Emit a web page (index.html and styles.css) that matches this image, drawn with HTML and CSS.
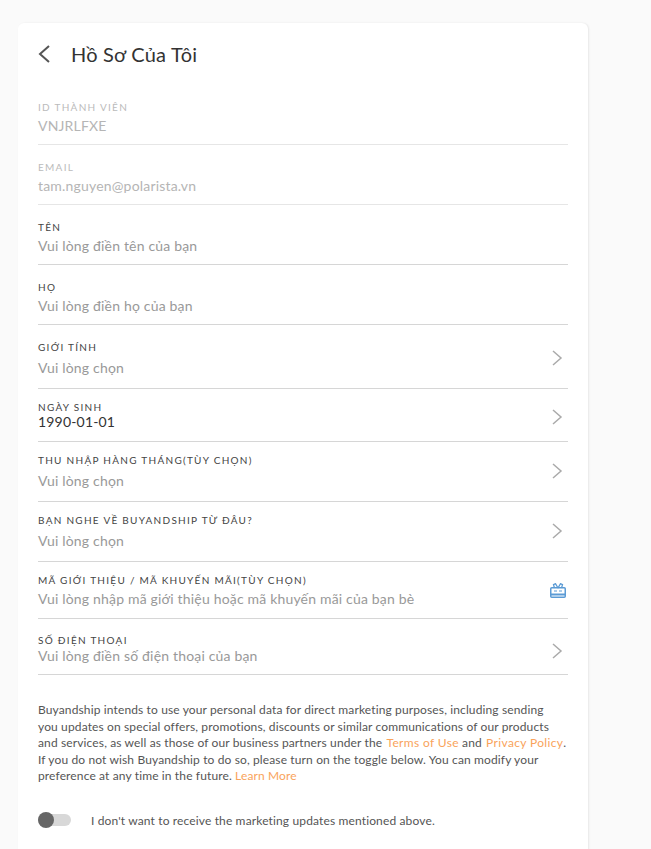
FILE: index.html
```html
<!DOCTYPE html>
<html lang="vi">
<head>
<meta charset="utf-8">
<title>Hồ Sơ Của Tôi</title>
<link rel="stylesheet" href="styles.css">
</head>
<body>
<main class="card">
  <header class="head">
    <svg class="back" width="14" height="20" viewBox="0 0 14 20"><path d="M12 2 L3 10 L12 18" fill="none" stroke="#555" stroke-width="2"/></svg>
    <h1 class="title">Hồ Sơ Của Tôi</h1>
  </header>
  <section class="form">
    <div class="row r-std muted"><div class="field"><div class="label">ID THÀNH VIÊN</div><div class="value">VNJRLFXE</div></div></div>
    <div class="row r-std muted"><div class="field"><div class="label">EMAIL</div><div class="value">tam.nguyen@polarista.vn</div></div></div>
    <div class="row r-std"><div class="field"><div class="label">TÊN</div><div class="value">Vui lòng điền tên của bạn</div></div></div>
    <div class="row r-std"><div class="field"><div class="label">HỌ</div><div class="value">Vui lòng điền họ của bạn</div></div></div>
    <div class="row r-gender"><div class="field"><div class="label">GIỚI TÍNH</div><div class="value">Vui lòng chọn</div></div>
      <svg class="chev chev-up" width="12" height="16" viewBox="0 0 12 16"><path d="M2 1 L10 8 L2 15" fill="none" stroke="#aaa" stroke-width="1.5"/></svg></div>
    <div class="row r-birth"><div class="field"><div class="label">NGÀY SINH</div><div class="value filled">1990-01-01</div></div>
      <svg class="chev chev-birth" width="12" height="16" viewBox="0 0 12 16"><path d="M2 1 L10 8 L2 15" fill="none" stroke="#aaa" stroke-width="1.5"/></svg></div>
    <div class="row r-select"><div class="field"><div class="label">THU NHẬP HÀNG THÁNG(TÙY CHỌN)</div><div class="value">Vui lòng chọn</div></div>
      <svg class="chev chev-up" width="12" height="16" viewBox="0 0 12 16"><path d="M2 1 L10 8 L2 15" fill="none" stroke="#aaa" stroke-width="1.5"/></svg></div>
    <div class="row r-select"><div class="field"><div class="label">BẠN NGHE VỀ BUYANDSHIP TỪ ĐÂU?</div><div class="value">Vui lòng chọn</div></div>
      <svg class="chev chev-up" width="12" height="16" viewBox="0 0 12 16"><path d="M2 1 L10 8 L2 15" fill="none" stroke="#aaa" stroke-width="1.5"/></svg></div>
    <div class="row r-code"><div class="field"><div class="label">MÃ GIỚI THIỆU / MÃ KHUYẾN MÃI(TÙY CHỌN)</div><div class="value">Vui lòng nhập mã giới thiệu hoặc mã khuyến mãi của bạn bè</div></div>
      <svg class="gift" width="16" height="15" viewBox="0 0 16 15" fill="none" stroke="#5b9bd5"><rect x="0.75" y="4.75" width="14.5" height="9.5" rx="1" stroke-width="1.5"/><path d="M1 11.5 H15" stroke-width="2"/><path d="M4 8 H7 M9 8 H12" stroke-width="1"/><path d="M8 5 L5.5 0.7 L3.5 1.7 L4.5 5 M8 5 L10.5 0.7 L12.5 1.7 L11.5 5" stroke-width="1.3"/></svg></div>
    <div class="row r-phone"><div class="field"><div class="label">SỐ ĐIỆN THOẠI</div><div class="value">Vui lòng điền số điện thoại của bạn</div></div>
      <svg class="chev chev-phone" width="12" height="16" viewBox="0 0 12 16"><path d="M2 1 L10 8 L2 15" fill="none" stroke="#aaa" stroke-width="1.5"/></svg></div>
  </section>
  <p class="notice">Buyandship intends to use your personal data for direct marketing purposes, including sending<br>you updates on special offers, promotions, discounts or similar communications of our products<br>and services, as well as those of our business partners under the <a class="link link-wide" href="#">Terms of Use</a> and <a class="link link-wide" href="#">Privacy Policy</a>.<br>If you do not wish Buyandship to do so, please turn on the toggle below. You can modify your<br>preference at any time in the future. <a class="link" href="#">Learn More</a></p>
  <div class="consent">
    <span class="toggle"><span class="knob"></span></span>
    <span class="consent-text">I don't want to receive the marketing updates mentioned above.</span>
  </div>
</main>
</body>
</html>
```
FILE: styles.css
```css
* { box-sizing: border-box; }
html, body { margin: 0; height: 100vh; overflow: hidden; }
body { background: #fafafa; font-family: Lato, "Noto Sans", sans-serif; color: #333; padding: 23px 0 0 18px; }
.card { width: 570px; min-height: 900px; background: #fff; border-radius: 6px; box-shadow: 1px 0 2px rgba(0,0,0,.08); padding: 0 20px; }
.head { display: flex; align-items: center; height: 62px; }
.back { margin: 0 20px 0 -1px; flex: none; }
.title { margin: 0; font-size: 20px; font-weight: 400; color: #333; letter-spacing: .22px; }
.row { display: flex; align-items: center; border-bottom: 1px solid #d6d6d6; }
.field { flex: 1; min-width: 0; }
.label { font-size: 10px; line-height: 14px; letter-spacing: 1.28px; color: #444; }
.value { font-size: 14px; letter-spacing: .18px; color: #999; }
.filled { color: #333; }
.muted { border-bottom-color: #e6e6e6; }
.muted .label { color: #bbb; }
.muted .value { color: #b5b5b5; }
.r-std { padding: 15px 0 6px; }
.r-std .value { line-height: 24px; }
.r-gender { padding: 15px 0 6px; }
.r-gender .value, .r-select .value { line-height: 28px; }
.r-birth { padding: 11px 0; }
.r-birth .value { line-height: 16px; }
.r-select { padding: 11px 0 6px; }
.r-code { padding: 11px 0 7px; }
.r-code .value { line-height: 24px; }
.r-phone { padding: 14px 0 9px; }
.r-phone .value { line-height: 18px; }
.chev { flex: none; margin-right: 5px; }
.chev-up { margin-bottom: 6px; }
.chev-birth { margin-top: 4px; }
.chev-phone { margin-top: 4px; }
.gift { flex: none; margin: 0 2px 4px 0; }
.notice { margin: 27px 0 0; font-size: 12px; line-height: 16.5px; color: #555; letter-spacing: .13px; white-space: nowrap; }
.link { color: #f9a35b; text-decoration: none; }
.link-wide { letter-spacing: .35px; margin-left: 1px; }
.consent { display: flex; align-items: center; margin-top: 28px; }
.toggle { position: relative; display: block; width: 33px; height: 12px; background: #d8d8d8; border-radius: 6px; margin-right: 20px; }
.knob { position: absolute; left: 0; top: -2px; width: 16px; height: 16px; border-radius: 50%; background: #666; }
.consent-text { font-size: 12px; color: #555; letter-spacing: .14px; }
```
